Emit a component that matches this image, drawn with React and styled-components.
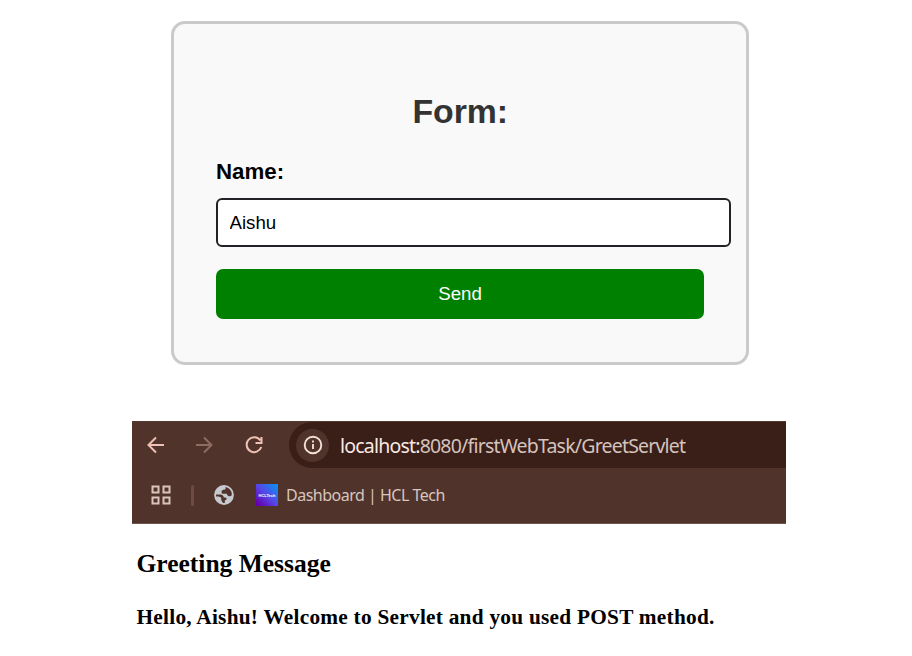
import React from "react";
import styled, { createGlobalStyle } from "styled-components";

const GlobalStyle = createGlobalStyle`
  * { box-sizing: border-box; }
  body { margin: 0; background: #fff; }
`;

const Page = styled.main`
  width: 912px;
  height: 656px;
  padding-top: 21px;
  overflow: hidden;
`;

const FormCard = styled.form`
  width: 577.5px;
  height: 344px;
  margin-left: 171px;
  padding: 0 41px 0 42px;
  border: 3px solid #cacaca;
  border-radius: 14px;
  background: #f9f9f9;
  font-family: "Liberation Sans", Arial, sans-serif;
`;

const FormTitle = styled.h2`
  margin: 0;
  padding-top: 67px;
  font-size: 33.8px;
  line-height: 40px;
  text-align: center;
  color: #333;
`;

const Label = styled.label`
  display: block;
  margin-top: 28px;
  font-size: 22.3px;
  line-height: 26px;
  font-weight: bold;
  color: #000;
`;

const NameInput = styled.input`
  display: block;
  width: 515px;
  height: 49px;
  margin: 13px 0 0;
  padding: 1px 11px 0 11.5px;
  border: 2px solid #222226;
  border-radius: 6px;
  background: #fff;
  color: #000;
  font: 18.7px "Liberation Sans", Arial, sans-serif;
  outline: none;
`;

const SendButton = styled.button`
  display: block;
  width: 488px;
  height: 50px;
  margin: 22px 0 0;
  padding: 0;
  border: 0;
  border-radius: 7px;
  background: #008000;
  color: #fff;
  font: 18.7px "Liberation Sans", Arial, sans-serif;
`;

const Browser = styled.section`
  width: 654px;
  height: 103px;
  margin: 56px 0 0 132px;
  background: #50342c;
  border-top: 1px solid #54382f;
  border-bottom: 1px solid #6d544d;
  font-family: "Noto Sans", "Open Sans", sans-serif;
`;

const NavBar = styled.div`
  display: flex;
  align-items: center;
  height: 46px;
`;

const NavIcon = styled.svg`
  flex: none;
  width: 20px;
  height: 20px;
  margin-left: ${(p) => p.$gap}px;
  fill: none;
  stroke: ${(p) => p.$color};
  stroke-width: 2;
`;

const AddressBar = styled.div`
  display: flex;
  align-items: center;
  flex: 1;
  height: 46px;
  margin-left: 25px;
  padding-left: 7px;
  border-radius: 23px 0 0 23px;
  background: #3a1e18;
`;

const InfoBadge = styled.span`
  display: grid;
  place-items: center;
  width: 33px;
  height: 33px;
  border-radius: 50%;
  background: #50342c;
`;

const Url = styled.span`
  margin-left: 11px;
  padding-top: 2px;
  font-size: 19.5px;
  line-height: 28px;
  letter-spacing: -0.8px;
  white-space: nowrap;
  color: #d5c3bd;
`;

const Host = styled.span`
  color: #f9e9e4;
`;

const Bookmarks = styled.div`
  display: flex;
  align-items: center;
  height: 54px;
  padding-left: 18px;
`;

const Divider = styled.span`
  width: 3px;
  height: 21px;
  margin: 0 20px 0 19px;
  border-radius: 2px;
  background: #6d4a42;
`;

const Favicon = styled.span`
  display: grid;
  place-items: center;
  width: 22px;
  height: 22px;
  margin-left: 22px;
  background: linear-gradient(45deg, #6500ae 8%, #5744e5 48%, #1686ef 88%);
  color: #fff;
  font: bold 4px/5px "Liberation Sans", Arial, sans-serif;
  white-space: nowrap;
`;

const BookmarkName = styled.span`
  margin-left: 8px;
  font-size: 16px;
  line-height: 22px;
  letter-spacing: -0.5px;
  white-space: nowrap;
  color: #d9c5be;
`;

const Response = styled.section`
  margin-left: 136.5px;
  padding-top: 25px;
  font-family: "Liberation Serif", "Times New Roman", serif;
  color: #000;
`;

const Heading = styled.h2`
  margin: 0;
  font-size: 25.5px;
  line-height: 30px;
  white-space: nowrap;
`;

const Message = styled.h3`
  margin: 25px 0 0;
  font-size: 21.3px;
  line-height: 26px;
  letter-spacing: 0.26px;
  white-space: nowrap;
`;

export default function App() {
  return (
    <>
      <GlobalStyle />
      <Page>
        <FormCard>
          <FormTitle>Form:</FormTitle>
          <Label htmlFor="name">Name:</Label>
          <NameInput id="name" defaultValue="Aishu" />
          <SendButton type="button">Send</SendButton>
        </FormCard>
        <Browser>
          <NavBar>
            <NavIcon $gap={14} $color="#efc0b4" viewBox="0 0 20 20">
              <path d="M18 10H3M10 2.500 2.500 10l7.500 7.500" />
            </NavIcon>
            <NavIcon $gap={28} $color="#8e6b63" viewBox="0 0 20 20">
              <path d="M2 10h15M10 2.500 17.500 10 10 17.500" />
            </NavIcon>
            <NavIcon $gap={30} $color="#efc0b4" viewBox="0 0 20 20">
              <path d="M16.300 5.300A7.500 7.500 0 1 0 17.300 12M17.500 2v6H11.500" />
            </NavIcon>
            <AddressBar>
              <InfoBadge>
                <svg width="20" height="20" viewBox="0 0 20 20" fill="none" stroke="#f3ded8" strokeWidth="1.900">
                  <circle cx="10" cy="10" r="8.300" />
                  <path d="M10 9v5M10 5.500v2" />
                </svg>
              </InfoBadge>
              <Url><Host>localhost:</Host>8080/firstWebTask/GreetServlet</Url>
            </AddressBar>
          </NavBar>
          <Bookmarks>
            <svg width="22" height="22" viewBox="0 0 22 22" fill="none" stroke="#d9c3bc" strokeWidth="2">
              <path d="M2.500 2.500h6v6h-6zM13.500 2.500h6v6h-6zM2.500 13.500h6v6h-6zM13.500 13.500h6v6h-6z" />
            </svg>
            <Divider />
            <svg width="20" height="20" viewBox="0 0 20 20" fill="#50342c">
              <circle cx="10" cy="10" r="9.900" fill="#c6c9ce" />
              <path d="M11.500 2C14.500 2.500 17 4.800 17.800 8L17.600 10.500C16.500 11.700 14.300 11.500 13.500 10.200L12.800 8.800H9.500C8 8.800 7.300 7.900 7.500 6.700C7.700 5.300 8.800 4.800 10.200 4.800L11.500 4.200z" />
              <path d="M2 9.400H6.200C8.500 9.400 9.700 10.700 9.700 12.500H11.200C12.500 12.500 12.800 13.300 12.500 14.200C12.200 15 11.300 15.200 10.800 15.500V18H9.200C8.500 17 7.300 16.200 7.300 14.800V13.500C7.300 12.200 5.800 11.400 4 11.400H2.100z" />
            </svg>
            <Favicon>HCLTech</Favicon>
            <BookmarkName>Dashboard | HCL Tech</BookmarkName>
          </Bookmarks>
        </Browser>
        <Response>
          <Heading>Greeting Message</Heading>
          <Message>Hello, Aishu! Welcome to Servlet and you used POST method.</Message>
        </Response>
      </Page>
    </>
  );
}
